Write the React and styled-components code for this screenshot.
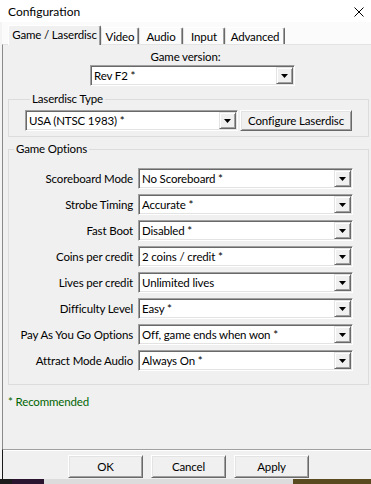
import React from 'react';
import styled, { createGlobalStyle } from 'styled-components';

const GlobalStyle = createGlobalStyle`
  html, body {
    margin: 0;
    padding: 0;
    background: #f0f0f0;
  }
  body {
    font-family: Lato, "Open Sans", sans-serif;
    font-size: 11.5px;
    letter-spacing: -0.15px;
    color: #000;
  }
`;

const Window = styled.div`
  width: 371px;
  height: 484px;
  display: flex;
  flex-direction: column;
  overflow: hidden;
  background: #f0f0f0;
`;

const TitleBar = styled.div`
  height: 22px;
  flex: none;
  display: flex;
  align-items: center;
  justify-content: space-between;
  padding: 0 7px 0 8px;
  background: #ffffff;
  font-size: 12px;
  letter-spacing: 0;
`;

const CloseIcon = styled.svg`
  width: 10px;
  height: 10px;
  margin-top: 2px;
`;

const Frame = styled.div`
  flex: 1;
  display: flex;
  flex-direction: column;
  border-left: 2px solid #f4f4f4;
`;

const TabStrip = styled.div`
  height: 22px;
  flex: none;
  display: flex;
  align-items: flex-end;
  padding-left: 5px;
  background: #fbfbfb;
  border-left: 1px solid #fbfbfb;
`;

const Tab = styled.div`
  width: ${(p) => p.w}px;
  height: ${(p) => (p.active ? 20 : 17)}px;
  margin-bottom: ${(p) => (p.active ? -1 : 0)}px;
  box-sizing: border-box;
  display: flex;
  align-items: center;
  justify-content: center;
  background: ${(p) => (p.active ? '#f0f0f0' : '#fbfbfb')};
  border-top: 1px solid #ffffff;
  border-left: 1px solid ${(p) => (p.active ? '#ffffff' : '#e3e3e3')};
  border-right: 1px solid #696969;
  box-shadow: inset -1px 0 #a0a0a0;
  border-radius: 2px 2px 0 0;
  position: relative;
  z-index: ${(p) => (p.active ? 2 : 1)};
  padding-bottom: ${(p) => (p.active ? 2 : 0)}px;
  white-space: nowrap;
`;

const TabPage = styled.div`
  flex: 1;
  display: flex;
  flex-direction: column;
  padding: 4px 0 0 5px;
  border-top: 1px solid #e3e3e3;
  border-left: 1px solid #8a8a8a;
`;

const CenterLabel = styled.div`
  height: 16px;
  line-height: 16px;
  text-align: center;
  padding-right: 8px;
`;

const Combo = styled.div`
  width: ${(p) => p.w}px;
  height: 21px;
  box-sizing: border-box;
  display: flex;
  align-items: stretch;
  background: #ffffff;
  border: 1px solid;
  border-color: #a0a0a0 #ffffff #ffffff #a0a0a0;
  box-shadow: inset 1px 1px #696969, inset -1px -1px #e3e3e3;
  padding: 1px;
  flex: none;
`;

const ComboText = styled.div`
  flex: 1;
  display: flex;
  align-items: center;
  padding-left: 2px;
  white-space: nowrap;
  overflow: hidden;
`;

const ArrowButton = styled.div`
  width: 17px;
  box-sizing: border-box;
  display: flex;
  align-items: center;
  justify-content: center;
  background: #f0f0f0;
  border: 1px solid;
  border-color: #e3e3e3 #696969 #696969 #e3e3e3;
  box-shadow: inset 1px 1px #ffffff, inset -1px -1px #a0a0a0;
`;

const VersionRow = styled.div`
  display: flex;
  padding-left: 82px;
`;

const Group = styled.fieldset`
  margin: ${(p) => p.top}px 0 0 0;
  width: 361px;
  box-sizing: border-box;
  min-width: 0;
  border: 1px solid #dcdcdc;
  padding: ${(p) => p.pad};
`;

const Legend = styled.legend`
  padding: 0 2px;
  margin-left: 5px;
  line-height: 16px;
  height: 16px;
`;

const LaserRow = styled.div`
  display: flex;
  gap: 2px;
`;

const PushButton = styled.button`
  width: ${(p) => p.w}px;
  height: ${(p) => p.h}px;
  flex: none;
  box-sizing: border-box;
  font: inherit;
  letter-spacing: inherit;
  color: #000;
  background: #f0f0f0;
  border: 1px solid;
  border-color: #ffffff #696969 #696969 #ffffff;
  box-shadow: inset 1px 1px #e3e3e3, inset -1px -1px #a0a0a0;
  padding: 0 0 1px;
  white-space: nowrap;
`;

const OptionRows = styled.div`
  display: flex;
  flex-direction: column;
  gap: 5px;
`;

const OptionRow = styled.div`
  display: flex;
  align-items: center;
  gap: 5px;
`;

const OptionLabel = styled.div`
  width: 124px;
  text-align: right;
  white-space: nowrap;
`;

const Note = styled.div`
  margin-top: 9px;
  color: #006400;
  line-height: 16px;
`;

const Footer = styled.div`
  height: 30px;
  flex: none;
  box-sizing: border-box;
  display: flex;
  gap: 8px;
  padding: 5px 0 0 65px;
  border-top: 1px solid #a0a0a0;
  border-left: 1px solid #1a1a1a;
  box-shadow: inset 0 1px #ffffff;
`;

const DesktopStrip = styled.div`
  height: 5px;
  flex: none;
  display: flex;
`;

const StripPart = styled.div`
  width: ${(p) => p.w}px;
  background: ${(p) => p.bg};
`;

const DropArrow = () => (
  <svg width="7" height="4" viewBox="0 0 7 4">
    <polygon points="0,0 7,0 3.5,4" fill="#000" />
  </svg>
);

const Select = ({ w, value }) => (
  <Combo w={w}>
    <ComboText>{value}</ComboText>
    <ArrowButton>
      <DropArrow />
    </ArrowButton>
  </Combo>
);

const tabs = [
  { label: 'Game / Laserdisc', w: 93, active: true },
  { label: 'Video', w: 38 },
  { label: 'Audio', w: 44 },
  { label: 'Input', w: 42 },
  { label: 'Advanced', w: 60 },
];

const options = [
  ['Scoreboard Mode', 'No Scoreboard *'],
  ['Strobe Timing', 'Accurate *'],
  ['Fast Boot', 'Disabled *'],
  ['Coins per credit', '2 coins / credit *'],
  ['Lives per credit', 'Unlimited lives'],
  ['Difficulty Level', 'Easy *'],
  ['Pay As You Go Options', 'Off, game ends when won *'],
  ['Attract Mode Audio', 'Always On *'],
];

export default function App() {
  return (
    <Window>
      <GlobalStyle />
      <TitleBar>
        <span>Configuration</span>
        <CloseIcon viewBox="0 0 10 10">
          <path d="M0.5 0.5 L9.5 9.5 M9.5 0.5 L0.5 9.5" stroke="#000" strokeWidth="1" />
        </CloseIcon>
      </TitleBar>
      <Frame>
        <TabStrip>
          {tabs.map((t) => (
            <Tab key={t.label} w={t.w} active={t.active}>
              {t.label}
            </Tab>
          ))}
        </TabStrip>
        <TabPage>
          <CenterLabel>Game version:</CenterLabel>
          <VersionRow>
            <Select w={205} value="Rev F2 *" />
          </VersionRow>
          <Group top={5} pad="3px 14px 5px 16px">
            <Legend>Laserdisc Type</Legend>
            <LaserRow>
              <Select w={213} value="USA (NTSC 1983) *" />
              <PushButton w={112} h={21}>Configure Laserdisc</PushButton>
            </LaserRow>
          </Group>
          <Group top={4} pad="11px 14px 13px 0">
            <Legend>Game Options</Legend>
            <OptionRows>
              {options.map(([label, value]) => (
                <OptionRow key={label}>
                  <OptionLabel>{label}</OptionLabel>
                  <Select w={215} value={value} />
                </OptionRow>
              ))}
            </OptionRows>
          </Group>
          <Note>* Recommended</Note>
        </TabPage>
        <Footer>
          <PushButton w={75} h={23}>OK</PushButton>
          <PushButton w={75} h={23}>Cancel</PushButton>
          <PushButton w={75} h={23}>Apply</PushButton>
        </Footer>
      </Frame>
      <DesktopStrip>
        <StripPart w={12} bg="#1c1c1c" />
        <StripPart w={32} bg="#2a1530" />
        <StripPart w={249} bg="#dcdcdc" />
        <StripPart w={78} bg="#5a4a20" />
      </DesktopStrip>
    </Window>
  );
}
